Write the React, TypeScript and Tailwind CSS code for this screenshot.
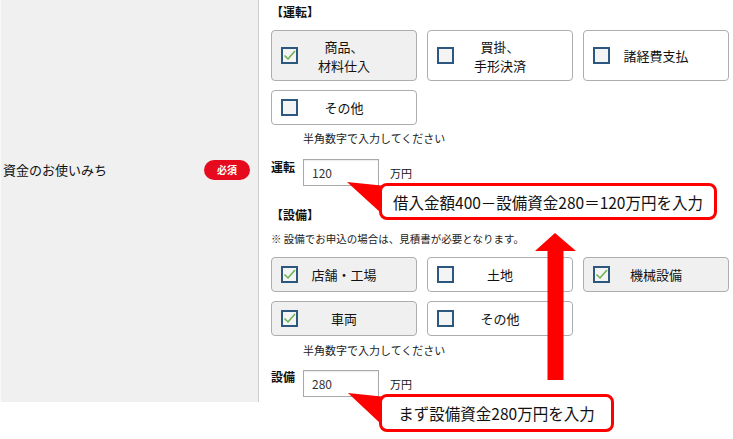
import React from 'react';

type Opt = { label: React.ReactNode; checked: boolean; tall?: boolean };

const CheckBox: React.FC<{ checked: boolean }> = ({ checked }) => (
  <svg width="17" height="17" viewBox="0 0 17 17" className="shrink-0">
    <rect x="1" y="1" width="15" height="15" fill="#f4f4f4" stroke="#2c5880" strokeWidth="2" />
    {checked && (
      <path d="M3.5 8.5 L7 12 L14 4" fill="none" stroke="#6ab04c" strokeWidth="1.5" />
    )}
  </svg>
);

const OptionButton: React.FC<Opt> = ({ label, checked, tall }) => (
  <div
    className={`w-[146px] flex items-center pl-[9px] pr-[26px] rounded-[4px] border border-[#adadad] ${
      checked ? 'bg-[#f0f0f0]' : 'bg-white'
    } ${tall ? 'h-[51px]' : 'h-[35px]'}`}
  >
    <CheckBox checked={checked} />
    <span className="flex-1 text-center text-[13px] leading-[19px] text-[#111]">{label}</span>
  </div>
);

const Callout: React.FC<{ box: string; tri: string; text: string }> = ({ box, tri, text }) => (
  <>
    <svg className="absolute left-0 top-0 pointer-events-none" width="733" height="439">
      <polygon points={tri} fill="#ff0000" />
    </svg>
    <div
      className={`absolute ${box} border-[3px] border-[#ff0000] rounded-[8px] bg-white flex items-center justify-center text-[15.5px] leading-[20px] text-[#111]`}
    >
      {text}
    </div>
  </>
);

export default function App() {
  return (
    <div className="relative w-[733px] h-[439px] bg-white font-['Noto_Sans_CJK_JP',sans-serif] overflow-hidden">
      <div className="flex h-[402px]">
        {/* label column */}
        <div className="w-[259px] shrink-0 bg-[#f0f0f0] border-l border-l-[#fafafa] border-r border-r-[#cfcfcf] pt-[160px] pl-[2px] pr-[8px]">
          <div className="flex items-center justify-between">
            <span className="text-[13px] leading-[20px] text-[#111]">資金のお使いみち</span>
            <span className="w-[46px] h-[20px] rounded-full bg-[#e60a1e] text-white text-[10px] leading-[12px] font-bold flex items-center justify-center">
              必須
            </span>
          </div>
        </div>

        {/* field column */}
        <div className="pl-[12px] pt-[4px] text-[#111]">
          <div className="h-[16px] text-[12px] leading-[16px] font-bold">【運転】</div>
          <div className="mt-[10px] flex gap-[10px]">
            <OptionButton checked tall label={<>商品、<br />材料仕入</>} />
            <OptionButton checked={false} tall label={<>買掛、<br />手形決済</>} />
            <OptionButton checked={false} tall label="諸経費支払" />
          </div>
          <div className="mt-[9px] flex gap-[10px]">
            <OptionButton checked={false} label="その他" />
          </div>
          <div className="mt-[6px] pl-[32px] h-[14px] text-[11px] leading-[14px] text-[#222]">半角数字で入力してください</div>
          <div className="mt-[14px] flex items-start">
            <span className="w-[32px] text-[12px] leading-[14px] font-bold pt-[1px]">運転</span>
            <div className="w-[76px] h-[27px] border border-[#a9a9a9] bg-white pl-[8px] flex items-center text-[12px] text-[#333] shadow-[inset_0_1px_1px_rgba(0,0,0,0.08)]">
              120
            </div>
            <span className="ml-[11px] mt-[7px] text-[11px] leading-[14px]">万円</span>
          </div>
          <div className="mt-[21px] h-[16px] text-[12px] leading-[16px] font-bold">【設備】</div>
          <div className="mt-[9px] h-[14px] text-[10.5px] leading-[14px] text-[#222]">※ 設備でお申込の場合は、見積書が必要となります。</div>
          <div className="mt-[11px] flex gap-[10px]">
            <OptionButton checked label="店舗・工場" />
            <OptionButton checked={false} label="土地" />
            <OptionButton checked label="機械設備" />
          </div>
          <div className="mt-[9px] flex gap-[10px]">
            <OptionButton checked label="車両" />
            <OptionButton checked={false} label="その他" />
          </div>
          <div className="mt-[7px] pl-[32px] h-[14px] text-[11px] leading-[14px] text-[#222]">半角数字で入力してください</div>
          <div className="mt-[13px] flex items-start">
            <span className="w-[32px] text-[12px] leading-[14px] font-bold">設備</span>
            <div className="w-[76px] h-[27px] border border-[#a9a9a9] bg-white pl-[8px] flex items-center text-[12px] text-[#333] shadow-[inset_0_1px_1px_rgba(0,0,0,0.08)]">
              280
            </div>
            <span className="ml-[11px] mt-[7px] text-[11px] leading-[14px]">万円</span>
          </div>
        </div>
      </div>

      {/* red arrow */}
      <svg className="absolute left-0 top-0 pointer-events-none" width="733" height="439">
        <polygon points="555,233 535,251 576,251" fill="#ff0000" />
        <rect x="547.5" y="250" width="16" height="130" fill="#ff0000" />
      </svg>

      <Callout
        box="left-[379px] top-[183px] w-[338px] h-[37px]"
        tri="347,182 386,186 381,213"
        text="借入金額400－設備資金280＝120万円を入力"
      />
      <Callout
        box="left-[379px] top-[394px] w-[235px] h-[38px]"
        tri="348,393 386,397 381,424"
        text="まず設備資金280万円を入力"
      />
    </div>
  );
}
